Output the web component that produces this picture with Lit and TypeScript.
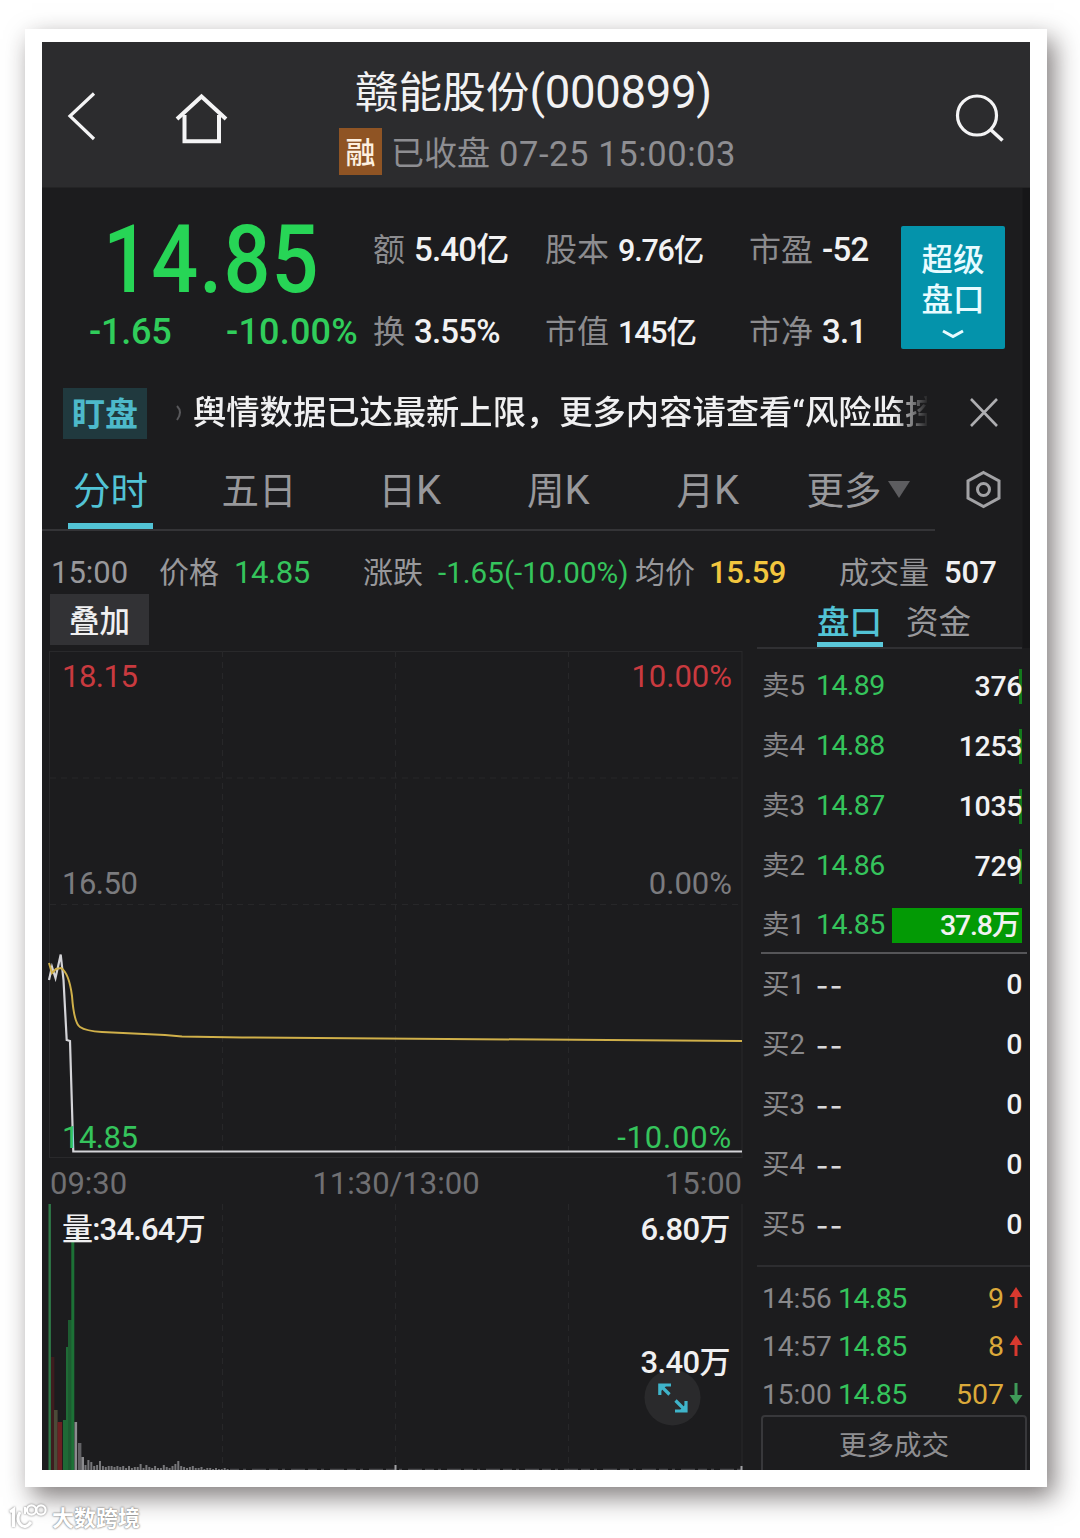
import { LitElement, html, css, svg } from "lit";
import { customElement } from "lit/decorators.js";

const base = css`
  :host {
    display: block;
    box-sizing: border-box;
    white-space: nowrap;
  }
  * {
    box-sizing: border-box;
  }
  svg {
    display: block;
  }
`;

@customElement("stock-header")
class StockHeader extends LitElement {
  static styles = [
    base,
    css`
      :host {
        height: 146px;
        background: #2c2c2e;
        border-bottom: 1px solid #242425;
      }
      .row {
        display: grid;
        grid-template-columns: 296px 1fr 111px;
        height: 145px;
      }
      .mid {
        display: flex;
        flex-direction: column;
      }
      .title {
        margin: 24px 0 0 17px;
        height: 54px;
        line-height: 54px;
        font-size: 43.6px;
        color: #f2f2f3;
      }
      .code {
        font-size: 45.5px;
        letter-spacing: -0.3px;
      }
      .sub {
        display: flex;
        align-items: center;
        margin: 7px 0 0 1px;
        height: 48px;
        line-height: 40px;
      }
      .tag {
        width: 43px;
        height: 47px;
        line-height: 49px;
        text-align: center;
        background: #8f5424;
        color: #fdf0e0;
        font-size: 30px;
        font-weight: 500;
      }
      .state {
        margin: 5px 0 0 9px;
        font-size: 33px;
        color: #8e8e92;
      }
      .stamp {
        margin: 5px 0 0 9px;
        font-size: 34.5px;
        letter-spacing: 0.6px;
        color: #8e8e92;
      }
    `,
  ];
  render() {
    return html`<div class="row">
      <svg width="296" height="145" fill="none" stroke="#f4f4f5">
        <path d="M52 51.500 28 74 52 97" stroke-width="3.200" />
        <path d="M135 77 159.500 54.500 184 77" stroke-width="4" />
        <path d="M142.500 73V99.300H177V73" stroke-width="4" />
      </svg>
      <div class="mid">
        <div class="title">赣能股份<span class="code">(000899)</span></div>
        <div class="sub">
          <span class="tag">融</span><span class="state">已收盘</span
          ><span class="stamp">07-25 15:00:03</span>
        </div>
      </div>
      <svg width="111" height="145" fill="none" stroke="#f4f4f5">
        <circle cx="58" cy="73.500" r="19.500" stroke-width="3.200" />
        <path d="M71 87 83.500 98.500" stroke-width="3.600" />
      </svg>
    </div>`;
  }
}

@customElement("quote-summary")
class QuoteSummary extends LitElement {
  static styles = [
    base,
    css`
      :host {
        height: 184px;
        display: grid;
        grid-template-columns: 331px 172px 204px 152px 104px;
      }
      .price {
        margin: 28px 0 0 61px;
        height: 88px;
        line-height: 88px;
        font-size: 94px;
        font-weight: 500;
        letter-spacing: 1.3px;
        color: #27d556;
        transform: scaleX(0.88);
        transform-origin: left;
      }
      .moves {
        display: flex;
        padding-left: 47px;
        height: 56px;
        line-height: 56px;
        font-size: 36px;
        letter-spacing: 0.2px;
        color: #30cd5b;
        font-weight: 500;
      }
      .diff {
        width: 137px;
        letter-spacing: -0.2px;
      }
      .col {
        padding-top: 21px;
      }
      .cell {
        display: flex;
        height: 82px;
        align-items: center;
        gap: 9px;
        line-height: 40px;
      }
      .k {
        color: #8c8c8f;
        font-size: 32px;
      }
      .v {
        color: #f2f2f3;
        font-size: 33px;
        font-weight: 500;
        letter-spacing: -0.8px;
      }
      .small .v {
        font-size: 30.5px;
        margin-top: 2px;
        letter-spacing: -1.2px;
      }
      .super {
        margin-top: 38px;
        height: 123px;
        border-radius: 2px;
        background: #0493ab;
        color: #e8fbff;
        font-size: 31.5px;
        line-height: 40px;
        font-weight: 500;
        text-align: center;
        padding-top: 15px;
      }
      .super svg {
        margin: 7px auto 0;
      }
    `,
  ];
  private cell(k: string, v: string) {
    return html`<div class="cell"><span class="k">${k}</span><span class="v">${v}</span></div>`;
  }
  render() {
    return html`
      <div>
        <div class="price">14.85</div>
        <div class="moves"><span class="diff">-1.65</span><span>-10.00%</span></div>
      </div>
      <div class="col">${this.cell("额", "5.40亿")}${this.cell("换", "3.55%")}</div>
      <div class="col small">${this.cell("股本", "9.76亿")}${this.cell("市值", "145亿")}</div>
      <div class="col">${this.cell("市盈", "-52")}${this.cell("市净", "3.1")}</div>
      <div class="super">
        超级<br />盘口
        <svg width="24" height="12" fill="none" stroke="#e8fbff" stroke-width="3">
          <path d="M2 3 12 8.500 22 3" />
        </svg>
      </div>
    `;
  }
}

@customElement("notice-bar")
class NoticeBar extends LitElement {
  static styles = [
    base,
    css`
      :host {
        height: 84px;
        display: flex;
        align-items: center;
        padding: 0 0 2px 21px;
      }
      .badge {
        width: 84px;
        height: 51px;
        line-height: 53px;
        text-align: center;
        background: #20393e;
        color: #4db9ca;
        font-size: 33px;
        font-weight: 700;
      }
      .tail {
        margin: 0 10px 0 28px;
      }
      .msg {
        width: 734px;
        overflow: hidden;
        color: #f0f0f1;
        font-size: 33.3px;
        font-weight: 500;
        line-height: 54px;
        -webkit-mask-image: linear-gradient(90deg, #000 700px, transparent 736px);
        mask-image: linear-gradient(90deg, #000 700px, transparent 736px);
      }
      .close {
        margin-left: 42px;
      }
    `,
  ];
  render() {
    return html`<span class="badge">盯盘</span>
      <svg class="tail" width="8" height="20" fill="none" stroke="#58585b" stroke-width="2">
        <path d="M2 3Q8 9 2 17" />
      </svg>
      <div class="msg">舆情数据已达最新上限，更多内容请查看“风险监控”</div>
      <svg class="close" width="30" height="30" fill="none" stroke="#aeaeb1" stroke-width="2.600">
        <path d="M2 1 28 28M28 1 2 28" />
      </svg>`;
  }
}

@customElement("period-tabs")
class PeriodTabs extends LitElement {
  static styles = [
    base,
    css`
      :host {
        height: 75px;
        display: grid;
        grid-template-columns: 893px 1fr;
      }
      .tabs {
        display: grid;
        grid-template-columns: 153.5px 157px 148.5px 149.5px 130px 1fr;
        padding-left: 26px;
        border-bottom: 2px solid #343437;
        color: #98989b;
        font-size: 37.5px;
        line-height: 70px;
      }
      .tab {
        display: flex;
      }
      .k {
        font-size: 40px;
      }
      .on {
        width: 85px;
        height: 73px;
        justify-content: center;
        color: #52c3d5;
        border-bottom: 6px solid #52c3d5;
      }
      .more svg {
        margin: 24px 0 0 6px;
      }
      .gear {
        margin: 14px 0 0 30px;
      }
    `,
  ];
  render() {
    return html`<div class="tabs">
        <span class="tab on">分时</span>
        <span class="tab">五日</span>
        <span class="tab">日<span class="k">K</span></span>
        <span class="tab">周<span class="k">K</span></span>
        <span class="tab">月<span class="k">K</span></span>
        <span class="tab more">更多<svg width="22" height="18"><path d="M0 1H22L11 18Z" fill="#5d5d60" /></svg></span>
      </div>
      <svg class="gear" width="38" height="40" fill="none" stroke="#a2a2a5" stroke-width="3">
        <path d="M18.500 2.500 34 11V28L18.500 36.500 3 28V11Z" />
        <circle cx="18.500" cy="19.500" r="6" />
      </svg>`;
  }
}

@customElement("tick-info")
class TickInfo extends LitElement {
  static styles = [
    base,
    css`
      :host {
        height: 63px;
        padding-left: 9px;
        display: grid;
        grid-template-columns: 108px 75px 129px 75px 197px 74px 130px 105px 1fr;
        line-height: 84px;
        font-size: 30px;
        color: #98989b;
      }
      .n {
        font-size: 31px;
      }
      .g {
        color: #35c45c;
      }
      .y {
        color: #f2c63e;
        font-weight: 500;
      }
      .w {
        color: #f0f0f1;
        font-weight: 500;
      }
      .n.g,
      .n.y {
        letter-spacing: -0.4px;
      }
      .chg {
        font-size: 29.6px;
      }
    `,
  ];
  render() {
    return html`<span class="n">15:00</span><span>价格</span><span class="n g">14.85</span>
      <span>涨跌</span><span class="chg g">-1.65(-10.00%)</span><span>均价</span>
      <span class="n y">15.59</span><span>成交量</span><span class="n w">507</span>`;
  }
}

const PRICE_LINE =
  "7,329 10,316 13.500,327 18.700,303.500 21.500,329 24.700,389 28,390 31.300,500.500 700,500.500";
const AVG_LINE =
  "M7,312 L10,322 L14,318 L19,317 Q27,322 30,345 Q32,372 38,376 Q44,380 60,381 L123,384 L140,385.500 L200,386.500 L700,390";

/* x, height, width, colour */
const VOLUME: [number, number, number, string][] = [
  [6.5, 266, 2.4, "#2f7a48"],
  [9, 113, 3.4, "#3d1c1e"],
  [12, 60, 3.6, "#4b4a38"],
  [15.5, 48, 4.6, "#6d2022"],
  [21, 50, 3, "#1f6a36"],
  [24, 123, 2.2, "#1f6a36"],
  [26, 150, 4, "#1d5c31"],
  [29.3, 230, 3, "#1c7136"],
  [32.5, 48, 2.6, "#8b8b8e"],
  [36, 27, 3.4, "#626265"],
  [39.4, 13, 2.6, "#8b8b8e"],
];
const TAIL = [
  5, 10, 8, 4, 5, 9, 4, 3, 4, 4, 3, 4, 3, 4, 2, 4, 2, 3, 3, 6, 2, 5, 3, 2, 4, 2, 2, 5, 3, 2, 4, 6, 9,
  4, 3, 2, 3, 4, 2, 2, 3, 1, 2, 2, 1, 2, 1, 1, 2, 1,
];

@customElement("minute-chart")
class MinuteChart extends LitElement {
  static styles = [
    base,
    css`
      :host {
        height: 876px;
        display: flex;
        flex-direction: column;
        font-size: 31px;
      }
      .overlay {
        margin-left: 8px;
        width: 99px;
        height: 51px;
        line-height: 55px;
        text-align: center;
        background: #323235;
        color: #f0f0f1;
        font-weight: 500;
        font-size: 30.5px;
      }
      .plot {
        position: relative;
        margin-top: 6px;
        height: 507px;
      }
      .lab {
        position: absolute;
        line-height: 36px;
      }
      .l {
        left: 20px;
        letter-spacing: -0.5px;
      }
      .r {
        right: 25px;
      }
      .t {
        top: 8px;
        color: #c93a3f;
      }
      .m {
        top: 215px;
        color: #7b7b7e;
      }
      .b {
        bottom: 2px;
        color: #35c45c;
      }
      .r.b {
        letter-spacing: 0.8px;
      }
      .times {
        display: flex;
        justify-content: space-between;
        padding: 0 15px 0 8px;
        height: 46px;
        line-height: 52px;
        color: #707073;
      }
      .vol {
        position: relative;
        height: 266px;
      }
      .w {
        color: #f0f0f1;
        font-weight: 500;
      }
      .v0 {
        top: 8px;
      }
      .v1 {
        top: 141px;
      }
      .l.w {
        letter-spacing: -0.8px;
      }
      .r.w {
        right: 27px;
        letter-spacing: -0.6px;
      }
      .zoom {
        position: absolute;
        left: 602px;
        top: 165px;
      }
    `,
  ];
  render() {
    const cols = [180.5, 353.5, 526.5];
    return html`
      <div class="overlay">叠加</div>
      <div class="plot">
        <svg width="715" height="507" fill="none">
          <rect x="7.500" y="0.500" width="692.500" height="506" stroke="#29292b" />
          ${cols.map((x) => svg`<path d="M${x} 0V507" stroke="#272729" stroke-dasharray="6 5" />`)}
          ${[127, 253.5].map((y) => svg`<path d="M8 ${y}H700" stroke="#272729" stroke-dasharray="6 5" />`)}
          <polyline points=${PRICE_LINE} stroke="#d4d4d8" stroke-width="2.200" />
          <path d=${AVG_LINE} stroke="#d0b04a" stroke-width="2" />
        </svg>
        <span class="lab l t">18.15</span><span class="lab r t">10.00%</span>
        <span class="lab l m">16.50</span><span class="lab r m">0.00%</span>
        <span class="lab l b">14.85</span><span class="lab r b">-10.00%</span>
      </div>
      <div class="times"><span>09:30</span><span>11:30/13:00</span><span>15:00</span></div>
      <div class="vol">
        <svg width="715" height="266" fill="none">
          ${cols.map((x) => svg`<path d="M${x} 0V266" stroke="#272729" stroke-dasharray="6 5" />`)}
          <path d="M700 0V266" stroke="#29292b" />
          ${VOLUME.map(([x, h, w, c]) => svg`<rect x=${x} y=${266 - h} width=${w} height=${h} fill=${c} />`)}
          ${TAIL.map((h, i) => svg`<rect x=${42.5 + i * 2.9} y=${266 - h} width="2" height=${h} fill="#77777a" />`)}
          <path d="M188 265.300H700" stroke="#58585b" stroke-dasharray="9 4 3 6 14 3" />
          <path d="M353.500 261V266M699.500 262V266" stroke="#a0a0a3" stroke-width="2" />
        </svg>
        <span class="lab l w v0">量:34.64万</span>
        <svg class="zoom" width="58" height="58" fill="none" stroke="#3fb4ca" stroke-width="3.200">
          <circle cx="28.500" cy="28.500" r="28" fill="#2a2a2c" stroke="none" />
          <path d="M25.500 25.500 16 16M15.800 26V16H27M31.500 31.500 41.500 41.500M42 32V42H31" />
          <path d="M16 16H23L16 23ZM42 42H35L42 35Z" fill="#3fb4ca" stroke="none" />
        </svg>
        <span class="lab r w v0">6.80万</span>
        <span class="lab r w v1">3.40万</span>
      </div>
    `;
  }
}

const ASKS = [
  ["卖5", "14.89", "376"],
  ["卖4", "14.88", "1253"],
  ["卖3", "14.87", "1035"],
  ["卖2", "14.86", "729"],
  ["卖1", "14.85", "37.8万"],
];
const TRADES = [
  ["14:56", "9", "up"],
  ["14:57", "8", "up"],
  ["15:00", "507", "down"],
];

@customElement("order-book")
class OrderBook extends LitElement {
  static styles = [
    base,
    css`
      :host {
        height: 876px;
        overflow: hidden;
        font-size: 28.5px;
      }
      .tabs {
        display: flex;
        gap: 23px;
        padding-left: 60px;
        height: 55px;
        font-size: 32.5px;
        line-height: 59px;
        color: #98989b;
        border-bottom: 2px solid #303033;
        margin-right: 8px;
      }
      .on {
        width: 66px;
        height: 53px;
        border-bottom: 5px solid #5bc8da;
        color: #52c3d5;
        font-weight: 500;
      }
      .asks {
        margin: 7px 3px 0 4px;
        height: 298px;
        border-bottom: 2px solid #555558;
      }
      .row {
        display: grid;
        grid-template-columns: 54px 76px 130px;
        height: 60px;
        align-items: center;
        margin-left: 1px;
        line-height: 36px;
      }
      .asks .row:last-child {
        margin-top: -1px;
      }
      .k {
        color: #88888b;
        font-size: 27.5px;
      }
      .p {
        color: #35c45c;
        letter-spacing: -0.6px;
      }
      .q {
        height: 35px;
        text-align: right;
        color: #f2f2f3;
        font-weight: 500;
        letter-spacing: -0.4px;
        border-right: 3px solid #137a1c;
      }
      .q span {
        margin-right: -3px;
      }
      .full {
        background: #039a05;
        border-color: #039a05;
        letter-spacing: -1.2px;
      }
      .full span {
        margin-right: 0;
      }
      .bids {
        padding-left: 4px;
        height: 313px;
        border-bottom: 2px solid #2d2d30;
      }
      .bids .row {
        padding-top: 1px;
      }
      .none {
        color: #d8d8da;
        font-family: "Noto Sans CJK SC", sans-serif;
        font-size: 35px;
        letter-spacing: 1.8px;
        line-height: 32px;
        margin-top: -6px;
      }
      .bids .q {
        border: 0;
      }
      .bids .q span {
        margin-right: 0;
      }
      .trades {
        padding: 7px 0 0 5px;
        height: 148px;
      }
      .trade {
        display: grid;
        grid-template-columns: 76px 90px 76px 1fr;
        height: 48px;
        align-items: center;
      }
      .trade .k {
        font-size: 28px;
      }
      .trade .n {
        text-align: right;
        color: #dba93a;
      }
      .trade svg {
        margin-left: 5px;
      }
      .more {
        margin: 0 3px 0 4px;
        height: 70px;
        border: 2px solid #38383b;
        border-radius: 4px;
        text-align: center;
        line-height: 57px;
        font-size: 27.5px;
        color: #8e8e91;
      }
    `,
  ];
  render() {
    return html`
      <div class="tabs"><span class="on">盘口</span><span>资金</span></div>
      <div class="asks">
        ${ASKS.map(
          ([k, p, q], i) => html`<div class="row">
            <span class="k">${k}</span><span class="p">${p}</span>
            <div class="q ${i === 4 ? "full" : ""}"><span>${q}</span></div>
          </div>`,
        )}
      </div>
      <div class="bids">
        ${[1, 2, 3, 4, 5].map(
          (n) => html`<div class="row">
            <span class="k">买${n}</span><span class="none">--</span>
            <div class="q"><span>0</span></div>
          </div>`,
        )}
      </div>
      <div class="trades">
        ${TRADES.map(
          ([t, n, dir]) => html`<div class="trade">
            <span class="k">${t}</span><span class="p">14.85</span><span class="n">${n}</span>
            <svg width="14" height="22" fill="none">
              ${dir === "up"
                ? svg`<path d="M7 21V6" stroke="#d8392f" stroke-width="3" /><path d="M0.500 10 7 0 13.500 10Z" fill="#d8392f" />`
                : svg`<path d="M7 0V16" stroke="#3f9a58" stroke-width="3" /><path d="M0.500 12 7 21.500 13.500 12Z" fill="#3f9a58" />`}
            </svg>
          </div>`,
        )}
      </div>
      <div class="more">更多成交</div>
    `;
  }
}

@customElement("site-mark")
class SiteMark extends LitElement {
  static styles = [
    base,
    css`
      :host {
        position: absolute;
        left: 8px;
        top: 1500px;
        display: flex;
        gap: 4px;
      }
      svg {
        filter: drop-shadow(0 0 1.2px #777);
      }
      .name {
        font-size: 22px;
        line-height: 37px;
        font-weight: 700;
        color: #fff;
        text-shadow: 0 0 2px #777, 0 0 2px #999;
      }
    `,
  ];
  render() {
    return html`<svg width="40" height="34" fill="none" stroke="#fff" stroke-width="3">
        <path d="M2 12 5.500 9.500V27" />
        <path d="M12 12Q8 19 12 24Q17 30 23 22" />
        <path d="M17 7V14" stroke-width="2" />
        <circle cx="23.500" cy="10" r="4.600" stroke-width="2.200" />
        <circle cx="33" cy="10" r="4.600" stroke-width="2.200" />
      </svg>
      <span class="name">大数跨境</span>`;
  }
}

@customElement("app-root")
class AppRoot extends LitElement {
  static styles = [
    base,
    css`
      :host {
        position: relative;
        width: 1080px;
        height: 1538px;
        overflow: hidden;
        background: #fff;
        padding: 29px 0 0 25px;
        font-family: Roboto, "Noto Sans CJK SC", sans-serif;
      }
      .sheet {
        width: 1022px;
        height: 1458px;
        padding: 13px 17px 17px;
        background: #fff;
        box-shadow: 7px 10px 24px rgba(30, 22, 22, 0.56);
      }
      .screen {
        height: 1428px;
        background: #1c1c1e;
        overflow: hidden;
      }
      .upper {
        height: 460px;
        background: linear-gradient(90deg, transparent 980px, #161618 981px);
      }
      .body {
        display: grid;
        grid-template-columns: 715px 273px;
      }
    `,
  ];
  render() {
    return html`<div class="sheet">
        <div class="screen">
          <stock-header></stock-header>
          <div class="upper">
            <quote-summary></quote-summary>
            <notice-bar></notice-bar>
            <period-tabs></period-tabs>
            <tick-info></tick-info>
            <div class="body">
              <minute-chart></minute-chart>
              <order-book></order-book>
            </div>
          </div>
        </div>
      </div>
      <site-mark></site-mark>`;
  }
}
